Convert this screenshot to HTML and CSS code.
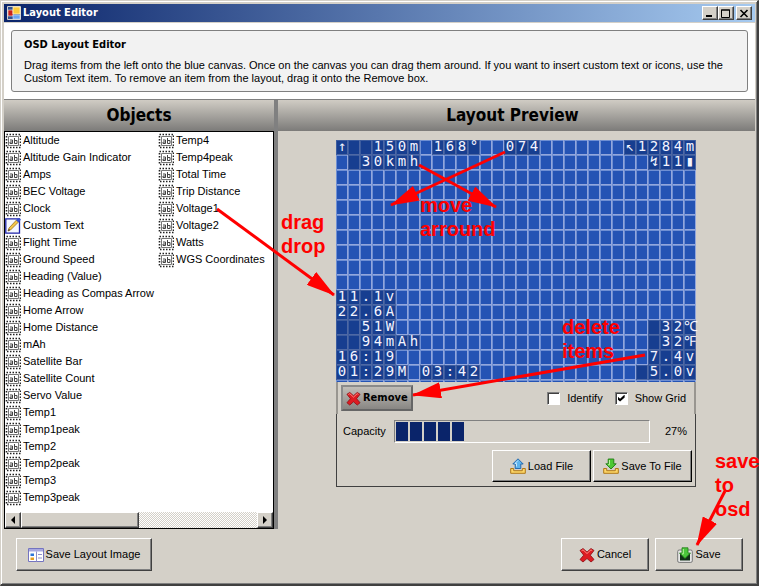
FILE: index.html
```html
<!DOCTYPE html>
<html lang="en">
<head>
<meta charset="utf-8">
<title>Layout Editor</title>
<link rel="stylesheet" href="styles.css">
</head>
<body>
<svg class="defs" aria-hidden="true">
  <symbol id="i-field" viewBox="0 0 16 16">
    <path d="M1.500 1.500h14v13h-14z" fill="none" stroke="#222" stroke-width="1.600" stroke-dasharray="1.500 1.500"/>
    <path d="M3.500 3.500h10v9h-10z" fill="#fff" stroke="#777"/>
    <path d="M5 7h2.500v3.500H5V9h2M9.500 5v5.500H12V7.500H9.500" fill="none" stroke="#444"/>
  </symbol>
  <symbol id="i-note" viewBox="0 0 16 16">
    <path d="M.8.8h13.700v14.400H.8z" fill="#f4f7ff" stroke="#1c22a8" stroke-width="1.300"/>
    <path d="M3 13l1-3L11.500 2l2 2-8 8z" fill="#f3c64a" stroke="#8a6210" stroke-width=".7"/>
    <path d="M11 2L13.500 0 16 1.500 13.500 4.500z" fill="#3a50d0"/>
    <path d="M3 13l1-2 1 1z" fill="#222"/>
  </symbol>
  <symbol id="i-cross" viewBox="0 0 16 16">
    <path d="M1 3.500L4 1.500 8 5 12 1.500 15 3.500 11.300 8.200 15 12.500 12 15 8 11.500 4 15 1 12.500 4.700 8.200z" fill="#dd1c22" stroke="#8c0a10" stroke-width=".8"/>
    <path d="M2.500 3.800L4 2.800 8 6.500l4-3.700 1.200.9" fill="none" stroke="#ff8a80"/>
  </symbol>
  <symbol id="i-tray" viewBox="0 0 16 16">
    <path d="M.7 10.500h3v2.200h8.600v-2.200h3v4.800H.7z" fill="#fcd567" stroke="#b07818"/>
  </symbol>
  <symbol id="i-load" viewBox="0 0 16 16">
    <use href="#i-tray"/>
    <path d="M8 .8L13.200 6H10.800v4.500H5.200V6H2.800z" fill="#5eb4ee" stroke="#1c62a8" stroke-width=".9"/>
    <path d="M8 2.500L5 5.500h1.500v3" fill="none" stroke="#c5e8ff"/>
  </symbol>
  <symbol id="i-store" viewBox="0 0 16 16">
    <use href="#i-tray"/>
    <path d="M8 11L13.200 5.800H10.800V1H5.200v4.800H2.800z" fill="#4cc832" stroke="#1f7a14" stroke-width=".9"/>
    <path d="M6.500 2v4.800H5" fill="none" stroke="#b8f59c"/>
  </symbol>
  <symbol id="i-save" viewBox="0 0 16 16">
    <rect x=".7" y="3" width="14.600" height="12.400" rx="1.500" fill="#e8e8e8" stroke="#777"/>
    <path d="M3 6h10v7.500H3z" fill="#123018"/>
    <path d="M8 11.500L13.500 6H11V.8H5V6H2.500z" fill="#4cc83c" stroke="#1f7a14" stroke-width=".8"/>
    <path d="M6.300 2v5H5" fill="none" stroke="#b8f59c"/>
  </symbol>
  <symbol id="i-image" viewBox="0 0 16 14">
    <path d="M.5.5h15v13H.5z" fill="#fff" stroke="#7474c0"/>
    <path d="M1 1h14v2.500H1z" fill="#a8a8e0"/>
    <path d="M8.500 3.500v10M10 6.500h4M10 10h4" stroke="#9090c8"/>
    <path d="M2.500 5.500h3.500v2.500H2.500z" fill="#2e76d8"/>
    <path d="M2.500 9.500h3.500V12H2.500z" fill="#e8a020"/>
  </symbol>
</svg>

<div class="window">
  <header class="titlebar">
    <svg class="app-icon" viewBox="0 0 14 14" aria-hidden="true">
      <path d="M.5.5h13v13H.5z" fill="#33508f" stroke="#d4d0c8"/>
      <path d="M1 4h5v6H1z" fill="#c8201c" stroke="#eee" stroke-width=".6"/>
      <path d="M6 1h7v7H6z" fill="#fbc93c" stroke="#fff3c0" stroke-width=".8"/>
      <path d="M6 9h7v4H6z" fill="#6aa4f0" stroke="#cfe2ff" stroke-width=".6"/>
    </svg>
    <h1>Layout Editor</h1>
    <button class="win-btn" aria-label="Minimize"><svg viewBox="0 0 10 9"><path d="M1 7h6" stroke="#000" stroke-width="2"/></svg></button>
    <button class="win-btn" aria-label="Maximize"><svg viewBox="0 0 10 9"><path d="M.5 1h8v7.500h-8zM0 1h9" fill="none" stroke="#000"/></svg></button>
    <button class="win-btn close" aria-label="Close"><svg viewBox="0 0 10 9"><path d="M1.500 1l7 7M8.500 1l-7 7" stroke="#000" stroke-width="1.600"/></svg></button>
  </header>

  <section class="intro">
    <div class="intro-box">
      <h2>OSD Layout Editor</h2>
      <p>Drag items from the left onto the blue canvas. Once on the canvas you can drag them around. If you want to insert custom text or icons, use the Custom Text item. To remove an item from the layout, drag it onto the Remove box.</p>
    </div>
  </section>

  <main class="panes">
    <section class="objects">
      <h2 class="pane-title">Objects</h2>
      <div class="list-box">
        <ul class="list" id="objects"></ul>
        <div class="scrollbar">
          <button aria-label="Scroll left"><svg viewBox="0 0 8 8"><path d="M6 0v8L2 4z"/></svg></button>
          <div class="track"><div class="thumb"></div></div>
          <button aria-label="Scroll right"><svg viewBox="0 0 8 8"><path d="M2 0v8l4-4z"/></svg></button>
        </div>
      </div>
    </section>
    <section class="preview">
      <h2 class="pane-title">Layout Preview</h2>
      <div class="preview-body">
        <div class="osd" id="osd"></div>
        <div class="tools">
          <button class="remove"><svg><use href="#i-cross"/></svg>Remove</button>
          <label><input type="checkbox">Identify</label>
          <label><input type="checkbox" checked>Show Grid</label>
        </div>
        <div class="storage">
          <div class="capacity">
            <label for="capacity">Capacity</label>
            <progress id="capacity" max="100" value="27"></progress>
            <span>27%</span>
          </div>
          <div class="file-buttons">
            <button class="btn strong"><svg><use href="#i-load"/></svg>Load File</button>
            <button class="btn strong"><svg><use href="#i-store"/></svg>Save To File</button>
          </div>
        </div>
      </div>
    </section>
  </main>

  <footer class="actions">
    <button class="btn wide"><svg><use href="#i-image"/></svg>Save Layout Image</button>
    <button class="btn"><svg><use href="#i-cross"/></svg>Cancel</button>
    <button class="btn"><svg><use href="#i-save"/></svg>Save</button>
  </footer>

  <div class="notes">
    <svg class="arrows" aria-hidden="true">
      <defs>
        <marker id="head" markerUnits="userSpaceOnUse" markerWidth="29" markerHeight="16" refX="28" refY="8" orient="auto"><path d="M0 0l29 8L0 16z" fill="#f00"/></marker>
      </defs>
      <g stroke="#f00" stroke-width="3">
        <path d="M217 209L334 295" marker-end="url(#head)"/>
        <path d="M505 152L391 205" marker-end="url(#head)"/>
        <path d="M419 165L496 207" marker-end="url(#head)"/>
        <path d="M645 355L413 395" marker-end="url(#head)"/>
        <path d="M725 491L697 545" marker-end="url(#head)"/>
      </g>
    </svg>
    <p class="note drag">drag<br>drop</p>
    <p class="note move">move<br>arround</p>
    <p class="note delete">delete<br>items</p>
    <p class="note save">save<br>to<br>osd</p>
  </div>
</div>
<script src="app.js"></script>
</body>
</html>
```
FILE: styles.css
```css
* { box-sizing: border-box; }

:root {
  --face: #d4d0c8;
  --shade: #808080;
}

body {
  margin: 0;
  background: var(--face);
  color: #000;
  font: 11px/13px "Liberation Sans", Arial, sans-serif;
}

h1, h2, p, ul { margin: 0; padding: 0; }
button { font: inherit; color: inherit; padding: 0; }
.defs { position: absolute; width: 0; height: 0; }

.window {
  position: relative;
  display: flex;
  flex-direction: column;
  min-height: 100vh;
  padding: 2px 2px 1px;
  border: 1px solid;
  border-color: var(--face) #404040 #404040 var(--face);
  border-width: 1px 2px 2px 1px;
  box-shadow: inset 1px 1px #fff, inset -1px -1px var(--shade);
}

/* Title bar */
.titlebar {
  display: flex;
  align-items: center;
  height: 19px;
  margin: 1px 0 0 1px;
  padding: 0 3px;
  background: linear-gradient(90deg, #0a246a, #a6caf0);
  border-bottom: 1px solid var(--face);
  color: #fff;
}
.app-icon { width: 14px; height: 14px; margin-right: 2px; }
.titlebar h1 {
  flex: 1;
  font: bold 11px/16px "DejaVu Sans Condensed", "Noto Sans", sans-serif;
}
.win-btn {
  display: flex;
  align-items: center;
  justify-content: center;
  width: 16px;
  height: 14px;
  background: var(--face);
  border: 1px solid;
  border-color: #fff #404040 #404040 #fff;
  box-shadow: inset -1px -1px var(--shade);
}
.win-btn svg { width: 10px; height: 9px; }
.close { margin-left: 2px; }

/* Intro */
.intro {
  margin-left: 1px;
  padding: 7px 7px;
  background: #fff;
  border-bottom: 1px solid var(--shade);
}
.intro-box {
  height: 62px;
  padding: 7px 20px 0 12px;
  background: #f2f2f2;
  border: 1px solid var(--shade);
  border-radius: 3px;
}
.intro h2 {
  margin-bottom: 8px;
  font: bold 11px/13px "DejaVu Sans Condensed", "Noto Sans", sans-serif;
}

/* Panes */
.panes { display: flex; }
.objects {
  width: 275px;
  padding-left: 1px;
  border-right: 4px solid var(--shade);
}
.preview { flex: 1; }
.pane-title {
  height: 31px;
  background: linear-gradient(#d0ccc4, #7c7b79);
  font: bold 17px/31px "DejaVu Sans Condensed", "Noto Sans", sans-serif;
  text-align: center;
}
.preview .pane-title { padding-right: 8px; }
.list-box {
  display: flex;
  flex-direction: column;
  justify-content: space-between;
  height: 398px;
  background: #fff;
  border: 1px solid #000;
}
.list {
  display: grid;
  grid-auto-flow: column;
  grid-template-rows: repeat(22, 17px);
  grid-template-columns: 153px 1fr;
  list-style: none;
}
.list li {
  display: flex;
  align-items: center;
  gap: 2px;
  line-height: 17px;
  white-space: nowrap;
}
.list svg { width: 16px; height: 16px; }

.scrollbar { display: flex; height: 16px; }
.scrollbar button, .thumb {
  width: 16px;
  height: 16px;
  background: var(--face);
  border: 1px solid;
  border-color: #fff #404040 #404040 #fff;
  box-shadow: inset -1px -1px var(--shade);
}
.scrollbar svg { display: block; width: 8px; height: 8px; margin: auto; }
.track {
  flex: 1;
  background: repeating-conic-gradient(#fff 0 25%, var(--face) 0 50%) 0 0 / 2px 2px;
}
.scrollbar .thumb { width: 50%; }

/* Preview */
.preview-body { width: 360px; margin: 9px 0 0 58px; }
.osd {
  display: grid;
  grid-template-columns: repeat(30, 12px);
  grid-template-rows: repeat(16, 15px);
  height: 242px;
  background:
    linear-gradient(90deg, #6f8fd3 1px, transparent 1px 11px, #92a6dc 11px) 0 0 / 12px 15px,
    linear-gradient(#6f8fd3 1px, transparent 1px 14px, #92a6dc 14px) 0 0 / 12px 15px,
    #2453b4;
}
.osd-item { display: flex; }
.osd-item span {
  width: 12px;
  height: 15px;
  background: rgba(10, 42, 108, 0.5);
  color: #f4f4ff;
  font: 14px/13px "DejaVu Sans Mono", monospace;
  text-align: center;
}
.tools {
  display: flex;
  align-items: center;
  height: 32px;
  padding: 0 8px 0 3px;
  border: 2px solid #999690;
  border-width: 0 2px;
}
.remove {
  display: flex;
  align-items: center;
  gap: 2px;
  width: 72px;
  height: 26px;
  margin-right: auto;
  padding-left: 3px;
  background: linear-gradient(#c0bdb8, #888683);
  border: 2px solid #777;
  border-color: #8a8a8a #666 #666 #8a8a8a;
  font: bold 11px/16px "DejaVu Sans Condensed", "Noto Sans", sans-serif;
}
.remove svg { flex: none; width: 15px; height: 15px; }
.tools label { display: flex; align-items: center; gap: 7px; margin-left: 12px; }
input[type="checkbox"] {
  appearance: none;
  width: 13px;
  height: 13px;
  margin: 0;
  background: #fff;
  border: 1px solid;
  border-color: var(--shade) #fff #fff var(--shade);
  box-shadow: inset 1px 1px #404040;
}
input:checked::after {
  content: "";
  display: block;
  width: 7px;
  height: 7px;
  margin: 2px;
  background: #000;
  clip-path: polygon(0 28%, 35% 62%, 100% 0, 100% 42%, 35% 100%, 0 70%);
}
.storage {
  height: 73px;
  padding: 6px 3px 3px 6px;
  border: 1px solid #404040;
  border-top: 0;
}
.capacity { display: flex; align-items: center; }
.capacity label { width: 51px; }
.capacity span { flex: 1; padding-right: 5px; text-align: right; }
progress {
  appearance: none;
  width: 256px;
  height: 23px;
  padding: 1px;
  background: var(--face);
  border: 1px solid;
  border-color: var(--shade) #fff #fff var(--shade);
}
progress::-webkit-progress-bar { background: var(--face); }
progress::-webkit-progress-value {
  background: repeating-linear-gradient(90deg, #0a246a 0 12px, var(--face) 12px 14px);
}
.file-buttons {
  display: flex;
  justify-content: flex-end;
  gap: 2px;
  margin-top: 7px;
}

.btn {
  display: flex;
  align-items: center;
  justify-content: center;
  gap: 2px;
  width: 88px;
  height: 33px;
  background: var(--face);
  border: 1px solid;
  border-color: #fff #404040 #404040 #fff;
  box-shadow: inset -1px -1px var(--shade);
}
.btn svg { width: 16px; height: 16px; }
.strong {
  width: 99px;
  height: 32px;
  border-color: #fff #000 #000 #fff;
}
.wide { width: 136px; margin-right: auto; }

.actions {
  display: flex;
  gap: 6px;
  padding: 9px 12px 0 13px;
}

/* Annotations over the window */
.notes {
  position: absolute;
  inset: -1px -2px -2px -1px;
  overflow: hidden;
  pointer-events: none;
}
.arrows { position: absolute; inset: 0; width: 100%; height: 100%; }
.note {
  position: absolute;
  color: #f00;
  font: bold 20px/24px "Liberation Sans", Arial, sans-serif;
}
.drag { left: 281px; top: 210px; }
.move { left: 420px; top: 193px; }
.delete { left: 562px; top: 315px; }
.save { left: 715px; top: 449px; }
```
FILE: app.js
```js
const objects = [
  "Altitude", "Altitude Gain Indicator", "Amps", "BEC Voltage", "Clock",
  "Custom Text", "Flight Time", "Ground Speed", "Heading (Value)",
  "Heading as Compas Arrow", "Home Arrow", "Home Distance", "mAh",
  "Satellite Bar", "Satellite Count", "Servo Value", "Temp1", "Temp1peak",
  "Temp2", "Temp2peak", "Temp3", "Temp3peak", "Temp4", "Temp4peak",
  "Total Time", "Trip Distance", "Voltage1", "Voltage2", "Watts",
  "WGS Coordinates"
];

document.getElementById("objects").innerHTML = objects.map(name => {
  const icon = name === "Custom Text" ? "i-note" : "i-field";
  return `<li><svg aria-hidden="true"><use href="#${icon}"/></svg>${name}</li>`;
}).join("");

// Each item: row, first column, text; one character fills one cell.
const items = [
  [1, 1, "↑"], [1, 2, "  150m"], [1, 9, "168°"], [1, 15, "074"],
  [1, 25, "↖1284m"], [2, 2, " 30kmh"], [2, 27, "↯11▮"],
  [11, 1, "11.1v"], [12, 1, "22.6A"], [13, 1, "  51W"], [14, 1, "  94mAh"],
  [15, 1, "16:19"], [16, 1, "01:29M"], [16, 8, "03:42"],
  [13, 27, " 32℃"], [14, 27, " 32℉"], [15, 27, "7.4v"], [16, 26, " 5.0v"]
];

document.getElementById("osd").innerHTML = items.map(([row, col, text]) => {
  const cells = [...text].map(ch => `<span>${ch}</span>`).join("");
  return `<div class="osd-item" style="grid-area:${row}/${col}/auto/span ${[...text].length}">${cells}</div>`;
}).join("");
```
